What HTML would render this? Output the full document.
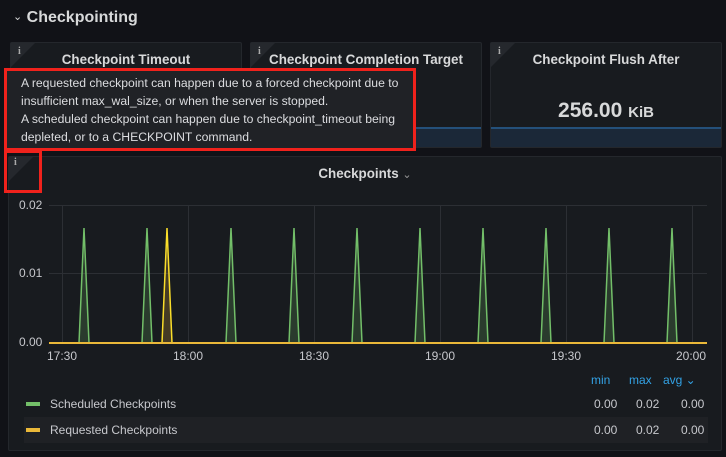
<!DOCTYPE html>
<html><head><meta charset="utf-8"><style>
*{box-sizing:border-box;margin:0;padding:0}
body{width:726px;height:457px;background:#111217;font-family:"Liberation Sans",sans-serif;color:#ccccdc;position:relative;overflow:hidden}
.abs{position:absolute}
.panel{position:absolute;background:#181b1f;border:1px solid #24272c;border-radius:2px}
.title{position:absolute;left:0;right:0;text-align:center;font-weight:bold;font-size:13.4px;color:#d8d9da}
.corner{position:absolute;left:0;top:0;width:0;height:0;border-top:24px solid #25282d;border-right:24px solid transparent}
.i{position:absolute;left:7px;top:3px;font-size:10px;font-family:"Liberation Serif",serif;color:#aaa;font-weight:bold}
.bar{position:absolute;left:0;right:0;bottom:0;height:20px;background:#1b2838;border-top:2px solid #24507a}
.lbl{position:absolute;font-size:12px;color:#c7c8cd}
</style></head><body>
<div class="abs" style="left:13px;top:9px;font-size:16px;font-weight:bold;color:#d8d9da"><span style="font-size:11px;font-weight:normal;position:relative;top:-2px">⌄</span> Checkpointing</div>

<div class="panel" style="left:10px;top:42px;width:232px;height:106px"><div class="corner"></div><div class="i">i</div><div class="title" style="top:9px">Checkpoint Timeout</div><div class="bar"></div></div>
<div class="panel" style="left:250px;top:42px;width:232px;height:106px"><div class="corner"></div><div class="i">i</div><div class="title" style="top:9px">Checkpoint Completion Target</div><div class="bar"></div></div>
<div class="panel" style="left:490px;top:42px;width:232px;height:106px"><div class="corner"></div><div class="i">i</div><div class="title" style="top:9px">Checkpoint Flush After</div><div class="title" style="top:56px;font-size:21px;color:#d8d9da">256.00 <span style="font-size:15px">KiB</span></div><div class="bar"></div></div>

<div class="abs" style="left:4px;top:68px;width:412px;height:83px;background:#202226;border:3px solid #f0221c;padding:3px 0 0 14px;font-size:12.2px;line-height:18px;color:#dcdde0">A requested checkpoint can happen due to a forced checkpoint due to<br>insufficient max_wal_size, or when the server is stopped.<br>A scheduled checkpoint can happen due to checkpoint_timeout being<br>depleted, or to a CHECKPOINT command.</div>

<div class="panel" style="left:8px;top:156px;width:714px;height:295px"><div class="corner"></div>
<div class="title" style="top:9px">Checkpoints <span style="font-weight:normal;font-size:11px;color:#999">⌄</span></div></div>
<div class="abs" style="left:4px;top:150px;width:38px;height:43px;border:3px solid #f0221c"></div>
<div class="abs" style="left:14px;top:157px;font-size:10px;font-family:'Liberation Serif',serif;color:#aaa;font-weight:bold">i</div>

<svg class="abs" style="left:0;top:0" width="726" height="457">
<g stroke="#2c2f34" stroke-width="1">
<line x1="49" y1="205.5" x2="707" y2="205.5"/><line x1="49" y1="273.5" x2="707" y2="273.5"/>
<line x1="62.5" y1="205" x2="62.5" y2="343"/><line x1="188.5" y1="205" x2="188.5" y2="343"/><line x1="314.5" y1="205" x2="314.5" y2="343"/><line x1="440.5" y1="205" x2="440.5" y2="343"/><line x1="566.5" y1="205" x2="566.5" y2="343"/><line x1="692.5" y1="205" x2="692.5" y2="343"/>
</g>
<g fill="rgba(115,191,105,0.2)" stroke="#73bf69" stroke-width="1.5">
<path d="M79 343 L84 228 L89 343"/><path d="M142 343 L147 228 L152 343"/><path d="M226 343 L231 228 L236 343"/><path d="M289 343 L294 228 L299 343"/><path d="M352 343 L357 228 L362 343"/><path d="M415 343 L420 228 L425 343"/><path d="M478 343 L483 228 L488 343"/><path d="M541 343 L546 228 L551 343"/><path d="M604 343 L609 228 L614 343"/><path d="M667 343 L672 228 L677 343"/>
</g>
<path d="M162 343 L167 228 L172 343" fill="rgba(250,190,60,0.2)" stroke="#fade2a" stroke-width="1.5"/>
<line x1="49" y1="343" x2="707" y2="343" stroke="#eab839" stroke-width="2"/>
</svg>
<div class="lbl" style="left:19px;top:198px">0.02</div>
<div class="lbl" style="left:19px;top:266px">0.01</div>
<div class="lbl" style="left:19px;top:335px">0.00</div>
<div class="lbl" style="left:47px;top:349px">17:30</div>
<div class="lbl" style="left:173px;top:349px">18:00</div>
<div class="lbl" style="left:299px;top:349px">18:30</div>
<div class="lbl" style="left:425px;top:349px">19:00</div>
<div class="lbl" style="left:551px;top:349px">19:30</div>
<div class="lbl" style="left:676px;top:349px">20:00</div>

<div class="abs" style="left:591px;top:373px;font-size:12px;color:#33a2e5">min</div>
<div class="abs" style="left:629px;top:373px;font-size:12px;color:#33a2e5">max</div>
<div class="abs" style="left:663px;top:373px;font-size:12px;color:#33a2e5">avg ⌄</div>

<div class="abs" style="left:24px;top:417px;width:684px;height:26px;background:#1f2125"></div>
<div class="abs" style="left:26px;top:402px;width:14px;height:4px;background:#73bf69"></div>
<div class="abs" style="left:26px;top:428px;width:14px;height:4px;background:#eab839"></div>
<div class="lbl" style="left:50px;top:397px">Scheduled Checkpoints</div>
<div class="lbl" style="left:50px;top:423px">Requested Checkpoints</div>
<div class="lbl" style="left:594px;top:397px">0.00</div><div class="lbl" style="left:636px;top:397px">0.02</div><div class="lbl" style="left:681px;top:397px">0.00</div>
<div class="lbl" style="left:594px;top:423px">0.00</div><div class="lbl" style="left:636px;top:423px">0.02</div><div class="lbl" style="left:681px;top:423px">0.00</div>
</body></html>
